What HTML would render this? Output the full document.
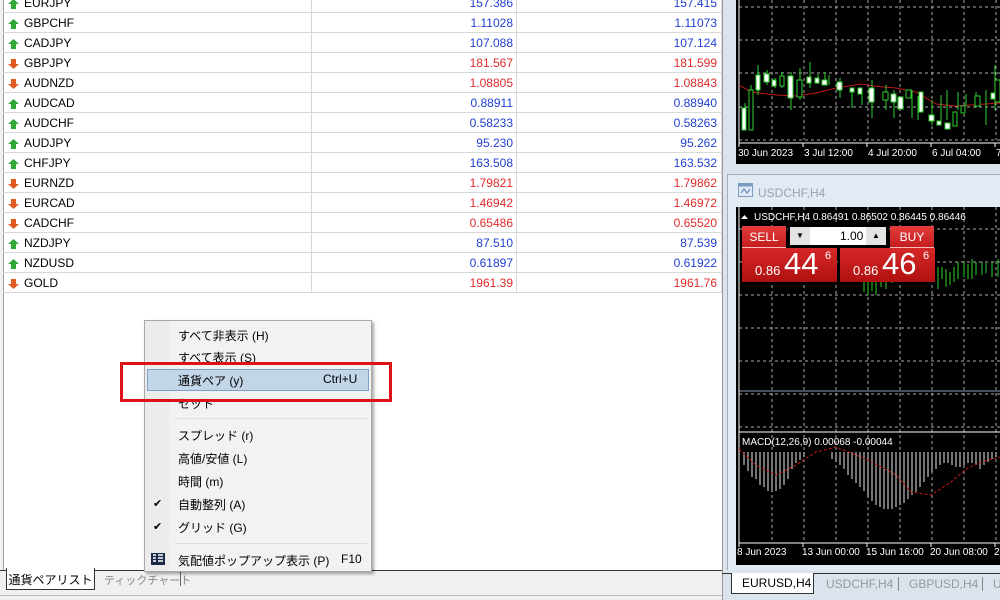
<!DOCTYPE html>
<html><head><meta charset="utf-8"><style>
*{margin:0;padding:0;box-sizing:border-box}
body{width:1000px;height:600px;overflow:hidden;background:#f0f0f0;font-family:"Liberation Sans","Noto Sans CJK JP",sans-serif;font-size:12px;position:relative}
.abs{position:absolute;white-space:nowrap}
#list{top:0;width:722px;height:570px;background:#fff;border-left:1px solid #a0a0a0;left:3px}
.row{position:absolute;left:0;width:718px;height:20px;border-bottom:1px solid #d8d8d8;color:#000}
.row span{position:absolute;top:3px}
.row .n{left:21px}
.row .b{right:208px}
.row .a{right:4px}
.vl{position:absolute;top:0;width:1px;height:293px;background:#d8d8d8}
.up,.dn{position:absolute;left:5px;top:6px;width:11px;height:10px}
.blue{color:#1f3fd0}.red{color:#e02a2a}
.menu{left:144px;top:320px;width:228px;height:252px;background:#f2f2f2;border:1px solid #a8a8a8;box-shadow:2px 2px 3px rgba(0,0,0,.35)}
.mi{position:absolute;left:33px;font-size:12px;color:#000;white-space:nowrap}
.chk{position:absolute;left:8px;font-size:11px}
</style></head><body>
<div class="abs" id="list">
<div class="vl" style="left:307px"></div><div class="vl" style="left:512px"></div><div class="vl" style="left:717px"></div>
</div>
<div class="abs" style="left:3px;top:-7px;width:718px">
<div class="row" style="top:0"><svg class="up" viewBox="0 0 11 10"><path d="M5.5 0L11 5H8V10H3V5H0Z" fill="#2fa83a"/></svg><span class="n">EURJPY</span><span class="b blue">157.386</span><span class="a blue">157.415</span></div>
<div class="row" style="top:20px"><svg class="up" viewBox="0 0 11 10"><path d="M5.5 0L11 5H8V10H3V5H0Z" fill="#2fa83a"/></svg><span class="n">GBPCHF</span><span class="b blue">1.11028</span><span class="a blue">1.11073</span></div>
<div class="row" style="top:40px"><svg class="up" viewBox="0 0 11 10"><path d="M5.5 0L11 5H8V10H3V5H0Z" fill="#2fa83a"/></svg><span class="n">CADJPY</span><span class="b blue">107.088</span><span class="a blue">107.124</span></div>
<div class="row" style="top:60px"><svg class="dn" viewBox="0 0 11 10"><path d="M5.5 10L11 5H8V0H3V5H0Z" fill="#e05a20"/></svg><span class="n">GBPJPY</span><span class="b red">181.567</span><span class="a red">181.599</span></div>
<div class="row" style="top:80px"><svg class="dn" viewBox="0 0 11 10"><path d="M5.5 10L11 5H8V0H3V5H0Z" fill="#e05a20"/></svg><span class="n">AUDNZD</span><span class="b red">1.08805</span><span class="a red">1.08843</span></div>
<div class="row" style="top:100px"><svg class="up" viewBox="0 0 11 10"><path d="M5.5 0L11 5H8V10H3V5H0Z" fill="#2fa83a"/></svg><span class="n">AUDCAD</span><span class="b blue">0.88911</span><span class="a blue">0.88940</span></div>
<div class="row" style="top:120px"><svg class="up" viewBox="0 0 11 10"><path d="M5.5 0L11 5H8V10H3V5H0Z" fill="#2fa83a"/></svg><span class="n">AUDCHF</span><span class="b blue">0.58233</span><span class="a blue">0.58263</span></div>
<div class="row" style="top:140px"><svg class="up" viewBox="0 0 11 10"><path d="M5.5 0L11 5H8V10H3V5H0Z" fill="#2fa83a"/></svg><span class="n">AUDJPY</span><span class="b blue">95.230</span><span class="a blue">95.262</span></div>
<div class="row" style="top:160px"><svg class="up" viewBox="0 0 11 10"><path d="M5.5 0L11 5H8V10H3V5H0Z" fill="#2fa83a"/></svg><span class="n">CHFJPY</span><span class="b blue">163.508</span><span class="a blue">163.532</span></div>
<div class="row" style="top:180px"><svg class="dn" viewBox="0 0 11 10"><path d="M5.5 10L11 5H8V0H3V5H0Z" fill="#e05a20"/></svg><span class="n">EURNZD</span><span class="b red">1.79821</span><span class="a red">1.79862</span></div>
<div class="row" style="top:200px"><svg class="dn" viewBox="0 0 11 10"><path d="M5.5 10L11 5H8V0H3V5H0Z" fill="#e05a20"/></svg><span class="n">EURCAD</span><span class="b red">1.46942</span><span class="a red">1.46972</span></div>
<div class="row" style="top:220px"><svg class="dn" viewBox="0 0 11 10"><path d="M5.5 10L11 5H8V0H3V5H0Z" fill="#e05a20"/></svg><span class="n">CADCHF</span><span class="b red">0.65486</span><span class="a red">0.65520</span></div>
<div class="row" style="top:240px"><svg class="up" viewBox="0 0 11 10"><path d="M5.5 0L11 5H8V10H3V5H0Z" fill="#2fa83a"/></svg><span class="n">NZDJPY</span><span class="b blue">87.510</span><span class="a blue">87.539</span></div>
<div class="row" style="top:260px"><svg class="up" viewBox="0 0 11 10"><path d="M5.5 0L11 5H8V10H3V5H0Z" fill="#2fa83a"/></svg><span class="n">NZDUSD</span><span class="b blue">0.61897</span><span class="a blue">0.61922</span></div>
<div class="row" style="top:280px"><svg class="dn" viewBox="0 0 11 10"><path d="M5.5 10L11 5H8V0H3V5H0Z" fill="#e05a20"/></svg><span class="n">GOLD</span><span class="b red">1961.39</span><span class="a red">1961.76</span></div>
</div>

<div class="abs" style="left:0;top:570px;width:724px;height:30px;background:#f0f0f0;border-top:1px solid #333"></div>
<div class="abs" style="left:6px;top:568px;width:89px;height:22px;background:#fff;border:1px solid #333;border-top:none;font-size:12px;padding-top:3px;text-align:center">通貨ペアリスト</div>
<div class="abs" style="left:104px;top:572px;font-size:11px;color:#888">ティックチャート</div>
<div class="abs" style="left:180px;top:572px;width:1px;height:14px;background:#666"></div>
<div class="abs" style="left:0;top:595px;width:724px;height:1px;background:#bbb"></div>

<div class="abs" style="left:722px;top:0;width:278px;height:600px;background:#dbe3ec;border-left:1px solid #999"></div>
<div class="abs" style="left:736px;top:0;width:264px;height:164px;background:#000"></div>
<svg class="abs" style="left:736px;top:0" width="264" height="164">
<g stroke="#aaa" stroke-dasharray="3,3" stroke-width="1">
<path d="M36 0V140M68 0V140M100 0V140M132 0V140M164 0V140M196 0V140M228 0V140M260 0V140M3 7H264M3 40H264M3 73H264M3 107H264M3 140H264"/></g>
<path d="M3 0V143H264M3 143v4M67 143v4M131 143v4M195 143v4M259 143v4" stroke="#fff" fill="none"/>
<path d="M3 85L15 92 40 95 60 96 80 93 100 88 125 84 138 86 160 88 180 92 200 104 220 106 264 103" stroke="#c01818" fill="none"/>
<g stroke="#2ed02e" fill="#fff">
<path d="M9 103V128M15 85V130M22 65V95M31 70V85M39 78V88M46 72V88M55 72V110M64 68V100M74 62V88M82 74V84M89 72V84M93 75V85M104 78V98M116 90V108M126 90V105M136 80V118M150 85V110M158 90V118M176 90V118M182 96V120M196 100V125M205 95V125M211 90V120M222 92V110M230 94V106M240 92V108M250 90V125M259 65V110"/>
<rect x="6" y="108" width="4" height="22"/><rect x="13" y="90" width="4" height="40" fill="#000"/><rect x="20" y="75" width="4" height="15"/><rect x="28" y="74" width="5" height="8" /><rect x="36" y="80" width="4" height="6"/><rect x="44" y="76" width="4" height="10" fill="#000"/><rect x="52" y="76" width="5" height="22"/><rect x="61" y="80" width="5" height="17" fill="#000"/><rect x="71" y="77" width="4" height="6"/><rect x="79" y="78" width="4" height="5"/><rect x="86" y="80" width="5" height="5"/><rect x="101" y="82" width="5" height="8"/><rect x="114" y="88" width="4" height="4"/><rect x="122" y="88" width="4" height="6"/><rect x="133" y="88" width="5" height="14"/><rect x="147" y="92" width="5" height="8" fill="#000"/><rect x="155" y="94" width="5" height="8"/><rect x="162" y="97" width="5" height="12"/><rect x="170" y="90" width="5" height="8" fill="#000"/><rect x="183" y="92" width="4" height="20"/><rect x="193" y="115" width="5" height="6"/><rect x="201" y="121" width="4" height="4"/><rect x="209" y="123" width="5" height="6"/><rect x="217" y="112" width="4" height="14" fill="#000"/><rect x="225" y="106" width="4" height="7" fill="#000"/><rect x="239" y="96" width="5" height="10" fill="#000"/><rect x="255" y="93" width="4" height="6"/><rect x="259" y="80" width="5" height="22" fill="#000"/>
</g>
<g fill="#fff" font-size="10" font-family="Liberation Sans"><text x="2" y="156">30 Jun 2023</text><text x="68" y="156">3 Jul 12:00</text><text x="132" y="156">4 Jul 20:00</text><text x="196" y="156">6 Jul 04:00</text><text x="260" y="156">7</text></g>
</svg>
<div class="abs" style="left:727px;top:174px;width:273px;height:396px;background:#e2eaf3;border-left:1px solid #aab;border-top:1px solid #aab"></div>
<svg class="abs" style="left:738px;top:183px" width="16" height="15"><rect x="0.5" y="0.5" width="14" height="13" fill="#dfe9f5" stroke="#7a9cc0"/><rect x="0.5" y="0.5" width="14" height="3" fill="#7a9cc0"/><path d="M3 10L6 6 9 10 12 6" stroke="#4a7ab0" fill="none"/></svg>
<div class="abs" style="left:758px;top:186px;color:#9aa4b0;font-size:12px">USDCHF,H4</div>
<div class="abs" style="left:736px;top:207px;width:264px;height:358px;background:#000"></div>
<svg class="abs" style="left:736px;top:207px" width="264" height="358">
<g stroke="#aaa" stroke-dasharray="3,3"><path d="M36 0V336M68 0V336M100 0V336M132 0V336M164 0V336M196 0V336M228 0V336M260 0V336M3 22H264M3 55H264M3 88H264M3 121H264M3 154H264M3 187H264M3 220H264"/></g>
<path d="M3 184H264" stroke="#8aa0b8"/>
<path d="M3 0V336H264M3 225H264" stroke="#fff" fill="none"/>
<path d="M3 336v4M67 336v4M131 336v4M195 336v4M259 336v4" stroke="#fff"/>
<g stroke="#2ed02e" fill="none"><path d="M128 70V85M132 72V88M136 75V84M140 70V88M145 68V80M150 66V82M156 62V76M162 62V74M180 55V75M184 58V70M188 57V72M192 55V67M196 55V72M202 60V82M206 60V72M210 62V80M214 65V78M218 60V75M222 55V72M228 55V70M232 57V72M236 52V72M240 55V68M246 55V68M250 56V66M256 55V70M262 52V70"/></g>
<g stroke="#e8e8e8"><path d="M8 245V258M12 245V264M16 245V270M20 245V272M24 245V278M28 245V280M32 245V284M36 245V285M40 245V284M44 245V282M48 245V278M52 245V272M56 245V262M60 245V256M64 245V253M68 245V250M96 245V252M100 245V255M104 245V258M108 245V262M112 245V268M116 245V272M120 245V276M124 245V280M128 245V284M132 245V290M136 245V294M140 245V298M144 245V300M148 245V302M152 245V302M156 245V302M160 245V300M164 245V298M168 245V296M172 245V292M176 245V288M180 245V285M184 245V280M188 245V275M192 245V270M196 245V265M200 245V262M204 245V258M208 245V256M212 245V256M216 245V258M220 245V260M224 245V260M228 245V258M232 245V256M236 245V256M240 245V258M244 245V262M248 245V258M252 245V255M256 245V252M260 245V250"/></g>
<path d="M3 242L20 258 40 268 60 258 80 245 100 240 130 252 160 268 175 285 195 288 215 275 230 262 245 255 264 250" stroke="#c01818" stroke-dasharray="3,2" fill="none"/>
<g fill="#fff" font-size="10" font-family="Liberation Sans"><text x="6" y="238">MACD(12,26,9) 0.00068 -0.00044</text><text x="1" y="348">8 Jun 2023</text><text x="66" y="348">13 Jun 00:00</text><text x="130" y="348">15 Jun 16:00</text><text x="194" y="348">20 Jun 08:00</text><text x="258" y="348">2</text>
<text x="18" y="13">USDCHF,H4  0.86491 0.86502 0.86445 0.86446</text></g>
<path d="M5 12L8.5 8 12 12Z" fill="#fff"/>
</svg>
<div class="abs" style="left:742px;top:226px;width:44px;height:22px;background:linear-gradient(#e43c3c,#c41e1e);color:#fff;font-size:12px;text-align:center;line-height:22px;border-bottom:1px solid #fbb">SELL</div>
<div class="abs" style="left:788px;top:225px;width:100px;height:22px;background:#fff;border:2px solid #000"></div>
<div class="abs" style="left:790px;top:227px;width:20px;height:18px;background:#e4e4e4;font-size:8px;text-align:center;line-height:18px">▼</div>
<div class="abs" style="left:866px;top:227px;width:20px;height:18px;background:#e4e4e4;font-size:8px;text-align:center;line-height:18px">▲</div>
<div class="abs" style="left:840px;top:229px;font-size:12px">1.00</div>
<div class="abs" style="left:890px;top:226px;width:44px;height:22px;background:linear-gradient(#e43c3c,#c41e1e);color:#fff;font-size:12px;text-align:center;line-height:22px;border-bottom:1px solid #fbb">BUY</div>
<div class="abs" style="left:742px;top:248px;width:95px;height:34px;background:linear-gradient(#d62828,#b01010);color:#fff"><span class="abs" style="left:13px;top:15px;font-size:13px">0.86</span><span class="abs" style="left:42px;top:-2px;font-size:31px">44</span><span class="abs" style="left:83px;top:2px;font-size:11px">6</span></div>
<div class="abs" style="left:840px;top:248px;width:95px;height:34px;background:linear-gradient(#d62828,#b01010);color:#fff"><span class="abs" style="left:13px;top:15px;font-size:13px">0.86</span><span class="abs" style="left:42px;top:-2px;font-size:31px">46</span><span class="abs" style="left:83px;top:2px;font-size:11px">6</span></div>
<div class="abs" style="left:722px;top:573px;width:278px;height:1px;background:#333"></div>
<div class="abs" style="left:731px;top:573px;width:83px;height:21px;background:#fff;border:1px solid #333;border-top:none;font-size:12px;padding:3px 0 0 10px">EURUSD,H4</div>
<div class="abs" style="left:826px;top:577px;font-size:12px;color:#999">USDCHF,H4</div>
<div class="abs" style="left:898px;top:577px;width:1px;height:14px;background:#888"></div>
<div class="abs" style="left:909px;top:577px;font-size:12px;color:#999">GBPUSD,H4</div>
<div class="abs" style="left:982px;top:577px;width:1px;height:14px;background:#888"></div>
<div class="abs" style="left:993px;top:577px;font-size:12px;color:#999">U</div>

<div class="abs menu">
<div class="abs" style="left:0;top:0;width:24px;height:250px;background:#ececec"></div>
<div class="mi" style="top:6px">すべて非表示 (H)</div>
<div class="mi" style="top:28px">すべて表示 (S)</div>
<div class="abs" style="left:2px;top:48px;width:222px;height:22px;background:#c3d6e8;border:1px solid #7aa2cc"></div>
<div class="mi" style="top:51px">通貨ペア (y)</div>
<div class="mi" style="top:51px;left:178px">Ctrl+U</div>
<div class="mi" style="top:74px">セット</div>
<div class="abs" style="left:30px;top:97px;width:192px;height:1px;background:#ddd"></div>
<div class="mi" style="top:106px">スプレッド (r)</div>
<div class="mi" style="top:129px">高値/安値 (L)</div>
<div class="mi" style="top:152px">時間 (m)</div>
<div class="chk" style="top:176px">✔</div><div class="mi" style="top:175px">自動整列 (A)</div>
<div class="chk" style="top:199px">✔</div><div class="mi" style="top:198px">グリッド (G)</div>
<div class="abs" style="left:30px;top:222px;width:192px;height:1px;background:#ddd"></div>
<svg class="abs" style="left:6px;top:232px" width="14" height="12"><rect width="14" height="12" fill="#1a2a48"/><path d="M2 2h3M2 5h3M2 8h3M7 2h5M7 5h5M7 8h5" stroke="#fff" stroke-width="1.5"/></svg>
<div class="mi" style="top:231px">気配値ポップアップ表示 (P)</div>
<div class="mi" style="top:231px;left:196px">F10</div>
</div>
<div class="abs" style="left:120px;top:362px;width:272px;height:40px;border:3px solid #e0101a"></div>
</body></html>
